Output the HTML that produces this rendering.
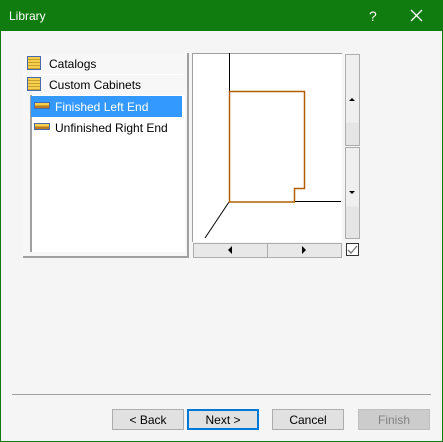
<!DOCTYPE html>
<html><head><style>
body{margin:0;width:443px;height:442px;overflow:hidden;font-family:"Liberation Sans",sans-serif;font-size:12px}
.win{position:absolute;left:0;top:0;width:441px;height:440px;border:1px solid #107c10;background:#f5f5f5}
.title{position:absolute;left:0;top:0;width:443px;height:31px;background:#107c10;color:#fff}
.a{position:absolute}
.btn{position:absolute;top:409px;width:70px;height:19px;border:1px solid #adadad;background:#e1e1e1;text-align:center;line-height:20px;color:#000}
.row{position:absolute;left:23px;width:160px;height:21px;line-height:23px}
.ic{position:absolute;left:4px;top:3px;width:12px;height:12px;border:1px solid #4868b0;background:repeating-linear-gradient(#f6d04d 0 2px,#c8a030 2px 3px)}
.ic2{position:absolute;left:3px;top:6px;width:14px;height:5px;border:1px solid #4868b0;background:linear-gradient(#f6d04d 0 50%,#b87a20 50%)}
</style></head><body>
<div class="win"></div>
<div class="title"><span class="a" style="left:9px;top:9px;font-size:12px">Library</span><span class="a" style="left:369px;top:8px;font-size:14px">?</span>
<svg class="a" style="left:410px;top:9px" width="13" height="13"><path d="M1 1L12 12M12 1L1 12" stroke="#fff" stroke-width="1.3"/></svg></div>
<div class="a" style="left:23px;top:53px;width:164px;height:203px;border-right:2px solid #a0a0a0;border-bottom:2px solid #a0a0a0;background:#f7f7f7"></div>
<div class="a" style="left:30px;top:95px;width:153px;height:157px;background:#fff;border-left:2px solid #a0a0a0"></div>
<div class="row" style="top:53px"><div class="ic"></div><span class="a" style="left:26px">Catalogs</span></div>
<div class="a" style="left:23px;top:74px;width:160px;height:1px;background:#fff"></div>
<div class="row" style="top:74px"><div class="ic"></div><span class="a" style="left:26px">Custom Cabinets</span></div>
<div class="a" style="left:31px;top:96px;width:151px;height:21px;background:#3399ff"></div>
<div class="row" style="top:96px;left:31px;color:#fff"><div class="ic2"></div><span class="a" style="left:24px">Finished Left End</span></div>
<div class="row" style="top:117px;left:31px"><div class="ic2"></div><span class="a" style="left:24px">Unfinished Right End</span></div>
<div class="a" style="left:192px;top:53px;width:149px;height:188px;background:#fff;border-left:1px solid #a0a0a0;border-top:1px solid #a0a0a0"></div>
<svg class="a" style="left:0;top:0" width="443" height="442">
<path d="M229.5 53V202" stroke="#000"/>
<path d="M294 201.5H341" stroke="#000"/>
<path d="M229 202L205 238" stroke="#000"/>
<path d="M229.5 91.5H304.5V188.5H294.5V202H229.5Z" fill="none" stroke="#b06000" stroke-width="1.5"/>
</svg>
<div class="a" style="left:193px;top:243px;width:73px;height:13px;border:1px solid #adadad;background:#e8e8e8"></div>
<div class="a" style="left:267px;top:243px;width:73px;height:13px;border:1px solid #adadad;background:#e8e8e8"></div>
<div class="a" style="left:228px;top:246px;width:0;height:0;border:4px solid transparent;border-right:4px solid #000;border-left:0"></div>
<div class="a" style="left:302px;top:246px;width:0;height:0;border:4px solid transparent;border-left:4px solid #000;border-right:0"></div>
<div class="a" style="left:345px;top:54px;width:13px;height:90px;border:1px solid #adadad;background:linear-gradient(#efefef 0 75%,#e5e5e5 75%)"></div>
<div class="a" style="left:345px;top:147px;width:13px;height:90px;border:1px solid #adadad;background:linear-gradient(#efefef 0 65%,#e5e5e5 65%)"></div>
<div class="a" style="left:349px;top:98px;border:3px solid transparent;border-bottom:3px solid #000;border-top:0"></div>
<div class="a" style="left:349px;top:191px;border:3px solid transparent;border-top:3px solid #000;border-bottom:0"></div>
<div class="a" style="left:346px;top:243px;width:11px;height:11px;border:1px solid #333;background:#fff"></div>
<svg class="a" style="left:347px;top:244px" width="11" height="11"><path d="M1 6L4 9L10 2" fill="none" stroke="#777" stroke-width="1.3"/></svg>
<div class="a" style="left:12px;top:394px;width:419px;height:1px;background:#a0a0a0"></div>
<div class="btn" style="left:112px">&lt; Back</div>
<div class="btn" style="left:187px;border:2px solid #0078d7;height:17px;line-height:18px;width:68px">Next &gt;</div>
<div class="btn" style="left:272px">Cancel</div>
<div class="btn" style="left:358px;background:#cccccc;border-color:#bfbfbf;color:#838383">Finish</div>
</body></html>
